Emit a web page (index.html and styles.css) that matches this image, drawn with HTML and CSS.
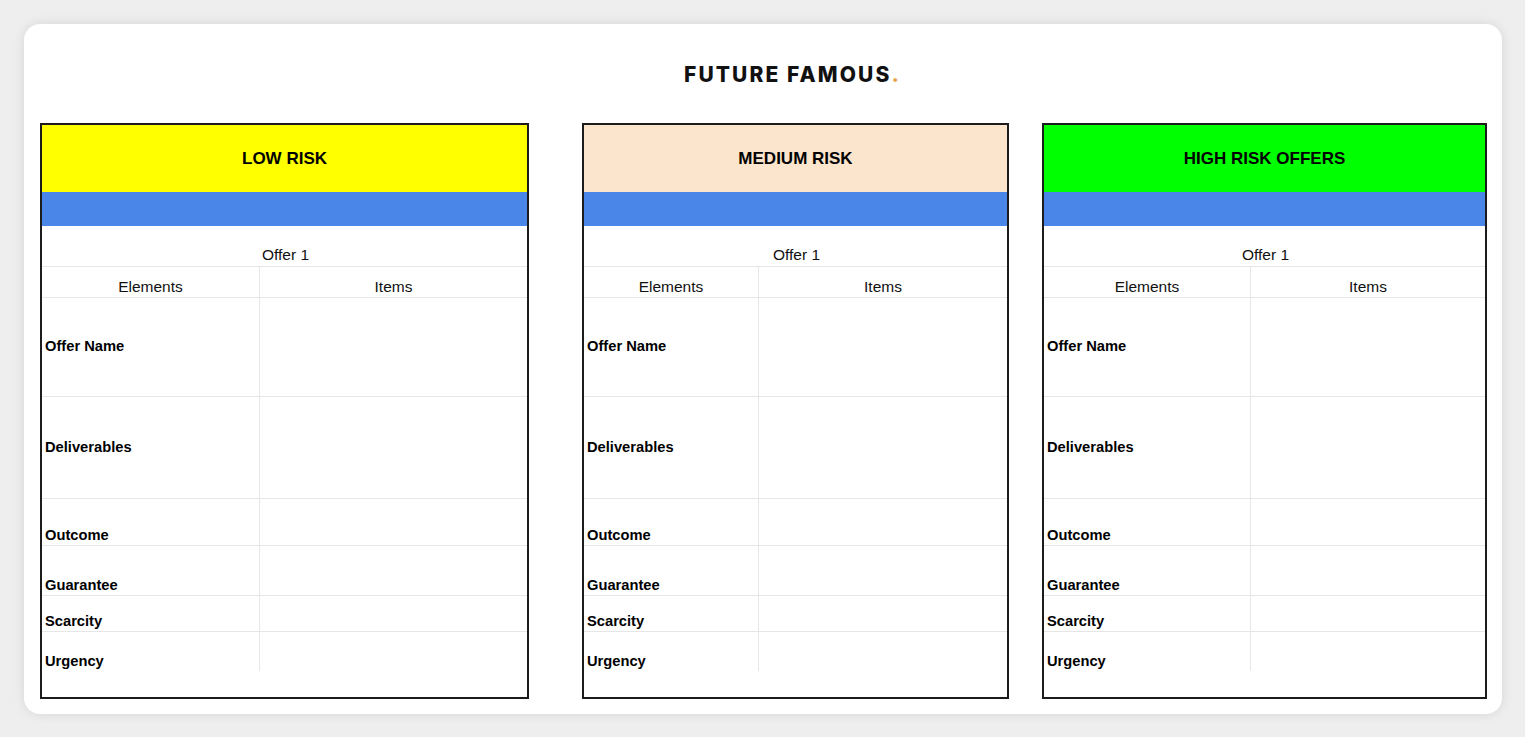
FILE: index.html
```html
<!DOCTYPE html>
<html lang="en">
<head>
<meta charset="utf-8">
<title>Future Famous – Offer Risk Sheet</title>
<link rel="stylesheet" href="styles.css">
</head>
<body>
<main class="card">
  <header class="brand"><span class="brand-name">FUTURE FAMOUS<span class="brand-dot">.</span></span></header>
  <section class="sheets">
    <div class="sheet sheet-low">
      <div class="sheet-title title-low">LOW RISK</div>
      <div class="sheet-band"></div>
      <div class="cell offer">Offer 1</div>
      <div class="cell head col1">Elements</div>
      <div class="cell head">Items</div>
      <div class="cell label mid col1">Offer Name</div><div class="cell"></div>
      <div class="cell label mid col1">Deliverables</div><div class="cell"></div>
      <div class="cell label col1">Outcome</div><div class="cell"></div>
      <div class="cell label col1">Guarantee</div><div class="cell"></div>
      <div class="cell label col1">Scarcity</div><div class="cell"></div>
      <div class="cell label col1 last">Urgency</div><div class="cell last"></div>
      <div class="filler"></div>
    </div>
    <div class="sheet sheet-med">
      <div class="sheet-title title-med">MEDIUM RISK</div>
      <div class="sheet-band"></div>
      <div class="cell offer">Offer 1</div>
      <div class="cell head col1">Elements</div>
      <div class="cell head">Items</div>
      <div class="cell label mid col1">Offer Name</div><div class="cell"></div>
      <div class="cell label mid col1">Deliverables</div><div class="cell"></div>
      <div class="cell label col1">Outcome</div><div class="cell"></div>
      <div class="cell label col1">Guarantee</div><div class="cell"></div>
      <div class="cell label col1">Scarcity</div><div class="cell"></div>
      <div class="cell label col1 last">Urgency</div><div class="cell last"></div>
      <div class="filler"></div>
    </div>
    <div class="sheet sheet-high">
      <div class="sheet-title title-high">HIGH RISK OFFERS</div>
      <div class="sheet-band"></div>
      <div class="cell offer">Offer 1</div>
      <div class="cell head col1">Elements</div>
      <div class="cell head">Items</div>
      <div class="cell label mid col1">Offer Name</div><div class="cell"></div>
      <div class="cell label mid col1">Deliverables</div><div class="cell"></div>
      <div class="cell label col1">Outcome</div><div class="cell"></div>
      <div class="cell label col1">Guarantee</div><div class="cell"></div>
      <div class="cell label col1">Scarcity</div><div class="cell"></div>
      <div class="cell label col1 last">Urgency</div><div class="cell last"></div>
      <div class="filler"></div>
    </div>
  </section>
</main>
</body>
</html>
```

FILE: styles.css
```css
* { box-sizing: border-box; }
html, body { margin: 0; padding: 0; }
body {
  background: #eeeeee;
  padding: 24px 23px 23px 24px;
  font-family: "Liberation Sans", Arial, sans-serif;
  color: #111;
}
.card {
  background: #fff;
  border-radius: 16px;
  box-shadow: 0 0 12px rgba(0, 0, 0, 0.10);
  height: 690px;
  padding: 0 15px 15px 16px;
  display: flex;
  flex-direction: column;
}
.brand {
  height: 99px;
  padding-top: 38px;
  padding-left: 58px;
  text-align: center;
}
.brand-name {
  font-family: Inter, "Liberation Sans", sans-serif;
  font-weight: 800;
  font-size: 21px;
  line-height: 25px;
  letter-spacing: 2.1px;
  color: #111;
}
.brand-dot { color: #e3a34a; }
.sheets {
  flex: 1;
  display: flex;
  align-items: stretch;
}
.sheet {
  border: 2px solid #1c1c1c;
  display: grid;
  grid-template-rows: 67px 34px 41px 31px 99px 102px 47px 50px 36px 39px 1fr;
  background: #fff;
}
.sheet-low { width: 489px; grid-template-columns: 218px 1fr; }
.sheet-med { width: 427px; margin-left: 53px; grid-template-columns: 175px 1fr; }
.sheet-high { width: 445px; margin-left: 33px; grid-template-columns: 207px 1fr; }
.sheet-title {
  grid-column: 1 / -1;
  display: flex;
  align-items: center;
  justify-content: center;
  font-weight: 700;
  font-size: 17px;
  color: #000;
  padding-top: 1px;
}
.title-low { background: #ffff00; }
.title-med { background: #fce5cd; }
.title-high { background: #00ff00; }
.sheet-band {
  grid-column: 1 / -1;
  background: #4a86e8;
}
.cell {
  border-bottom: 1px solid #e6e6e6;
  display: flex;
  align-items: flex-end;
  font-size: 14.7px;
  line-height: 17px;
  padding: 0 3px 1px;
}
.cell.last { border-bottom: 0; padding-bottom: 1px; }
.col1 { border-right: 1px solid #e6e6e6; }
.offer {
  grid-column: 1 / -1;
  justify-content: center;
  font-size: 15.5px;
  line-height: 18px;
  padding: 0 0 2px 2px;
}
.head {
  justify-content: center;
  font-size: 15.5px;
  line-height: 18px;
  padding-bottom: 1px;
}
.label { font-weight: 700; color: #000; }
.label.mid { align-items: center; padding-bottom: 1px; }
.filler { grid-column: 1 / -1; }
```
